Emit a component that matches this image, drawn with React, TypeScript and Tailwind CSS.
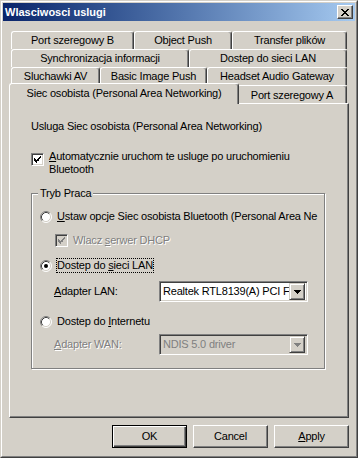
import clsx from 'clsx';

const raised = 'border-t border-l border-t-white border-l-white border-r border-b border-r-[#404040] border-b-[#404040] shadow-[inset_-1px_-1px_0_#808080]';
const sunken = 'border-t border-l border-t-[#808080] border-l-[#808080] border-r border-b border-r-white border-b-white shadow-[inset_1px_1px_0_#404040,inset_-1px_-1px_0_#d4d0c8]';
const disabledText = 'text-[#808080] [text-shadow:1px_1px_0_#fff]';

function Tab({ label, className }: { label: string; className: string }) {
  return (
    <div
      className={clsx(
        'h-[18px] flex items-center justify-center whitespace-nowrap rounded-t-[3px] border-t border-l border-r border-t-white border-l-white border-r-[#404040] shadow-[inset_-1px_0_0_#808080]',
        className
      )}
    >
      {label}
    </div>
  );
}

function CheckMark({ color }: { color: string }) {
  return (
    <svg width="7" height="7" viewBox="0 0 7 7" shapeRendering="crispEdges">
      <path d="M0 2h1v1h-1zM0 3h2v1h-2zM0 4h3v1h-3zM1 5h2v1h-2zM2 6h1v1h-1zM3 3h2v1h-2zM3 4h2v1h-2zM4 2h2v1h-2zM5 1h2v1h-2zM6 0h1v1h-1zM5 2h1v1h-1z" fill={color} />
    </svg>
  );
}

function Checkbox({ disabled }: { disabled?: boolean }) {
  return (
    <div
      className={clsx(
        'w-[13px] h-[13px] shrink-0 flex items-center justify-center',
        sunken,
        disabled ? 'bg-[#d4d0c8]' : 'bg-white'
      )}
    >
      <CheckMark color={disabled ? '#808080' : '#000'} />
    </div>
  );
}

function Radio({ checked }: { checked?: boolean }) {
  return (
    <svg width="12" height="12" viewBox="0 0 12 12" className="shrink-0">
      <circle cx="6" cy="6" r="5" fill="#fff" />
      <path d="M2.11 9.89A5.5 5.5 0 0 1 9.89 2.11" stroke="#808080" fill="none" />
      <path d="M9.89 2.11A5.5 5.5 0 0 1 2.11 9.89" stroke="#fff" fill="none" />
      <path d="M2.82 9.18A4.5 4.5 0 0 1 9.18 2.82" stroke="#404040" fill="none" />
      <path d="M9.18 2.82A4.5 4.5 0 0 1 2.82 9.18" stroke="#d4d0c8" fill="none" />
      {checked && <circle cx="6" cy="6" r="2" fill="#000" />}
    </svg>
  );
}

function Combo({ value, disabled }: { value: string; disabled?: boolean }) {
  return (
    <div className={clsx('w-[149px] h-[21px] flex items-center p-[2px]', sunken, disabled ? 'bg-[#d4d0c8]' : 'bg-white')}>
      <div className={clsx('flex-1 overflow-hidden whitespace-nowrap pl-[1px]', disabled ? 'text-[#808080]' : 'text-black')}>
        {value}
      </div>
      <div className="w-[16px] h-[17px] shrink-0 flex items-center justify-center bg-[#d4d0c8] border-t border-l border-t-[#d4d0c8] border-l-[#d4d0c8] border-r border-b border-r-[#404040] border-b-[#404040] shadow-[inset_1px_1px_0_#fff,inset_-1px_-1px_0_#808080]">
        <svg width="7" height="4" viewBox="0 0 7 4" shapeRendering="crispEdges">
          <path d="M0 0h7v1h-7zM1 1h5v1h-5zM2 2h3v1h-3zM3 3h1v1h-1z" fill={disabled ? '#808080' : '#000'} />
        </svg>
      </div>
    </div>
  );
}

function Button({ label, isDefault }: { label: React.ReactNode; isDefault?: boolean }) {
  return (
    <div
      className={clsx(
        'w-[75px] h-[23px] flex items-center justify-center',
        isDefault
          ? 'border border-black shadow-[inset_1px_1px_0_#fff,inset_-1px_-1px_0_#404040,inset_-2px_-2px_0_#808080]'
          : raised
      )}
    >
      {label}
    </div>
  );
}

export default function App() {
  return (
    <div className="w-[358px] h-[458px] bg-[#d4d0c8] border border-t-[#d4d0c8] border-l-[#d4d0c8] border-r-[#404040] border-b-[#404040] font-['Liberation_Sans',Arial,sans-serif] text-[11px] leading-[13px] tracking-[-0.2px] text-black select-none">
      <div className="h-full border border-t-white border-l-white border-r-[#808080] border-b-[#808080] p-[1px] flex flex-col">
        {/* title bar */}
        <div className="h-[18px] shrink-0 flex items-center justify-between pl-[2px] pr-[2px] bg-linear-to-r from-[#0a246a] to-[#a6caf0]">
          <span className="text-white font-bold tracking-normal">Wlasciwosci uslugi</span>
          <div className={clsx('w-[16px] h-[14px] bg-[#d4d0c8] flex items-center justify-center', raised)}>
            <svg width="8" height="7" viewBox="0 0 8 7" shapeRendering="crispEdges">
              <path d="M0 0h2v1h-2zM6 0h2v1h-2zM1 1h2v1h-2zM5 1h2v1h-2zM2 2h4v1h-4zM3 3h2v1h-2zM2 4h4v1h-4zM1 5h2v1h-2zM5 5h2v1h-2zM0 6h2v1h-2zM6 6h2v1h-2z" fill="#000" />
            </svg>
          </div>
        </div>

        {/* tabs */}
        <div className="mt-[10px] ml-[6px] w-[340px]">
          <div className="flex h-[18px] pl-[2px]">
            <Tab label="Port szeregowy B" className="w-[123px]" />
            <Tab label="Object Push" className="w-[98px]" />
            <Tab label="Transfer plików" className="w-[115px]" />
          </div>
          <div className="flex h-[18px] pl-[2px]">
            <Tab label="Synchronizacja informacji" className="w-[178px]" />
            <Tab label="Dostep do sieci LAN" className="w-[158px]" />
          </div>
          <div className="flex h-[18px] pl-[2px]">
            <Tab label="Sluchawki AV" className="w-[89px]" />
            <Tab label="Basic Image Push" className="w-[107px]" />
            <Tab label="Headset Audio Gateway" className="w-[140px]" />
          </div>
          <div className="flex h-[18px]">
            <div className="relative z-10 -mt-[2px] w-[230px] h-[21px] flex justify-center pt-[3px] bg-[#d4d0c8] whitespace-nowrap rounded-t-[3px] border-t border-l border-r border-t-white border-l-white border-r-[#404040] shadow-[inset_-1px_0_0_#808080]">
              Siec osobista (Personal Area Networking)
            </div>
            <Tab label="Port szeregowy A" className="w-[110px] -ml-[2px] pt-[2px]" />
          </div>

          {/* panel */}
          <div className={clsx('h-[315px] flex flex-col pl-[21px] pt-[16px]', raised)}>
            <div>Usluga Siec osobista (Personal Area Networking)</div>

            <div className="mt-[17px] flex items-start">
              <div className="mt-[3px]">
                <Checkbox />
              </div>
              <div className="ml-[5px]">
                <span className="underline">A</span>utomatycznie uruchom te usluge po uruchomieniu
                <br />
                Bluetooth
              </div>
            </div>

            {/* group */}
            <div className="relative mt-[17px] w-[294px] h-[176px] border border-[#808080] shadow-[inset_1px_1px_0_#fff,1px_1px_0_#fff] pl-[8px] flex flex-col">
              <span className="absolute -top-[7px] left-[6px] px-[2px] bg-[#d4d0c8]">Tryb Praca</span>

              <div className="mt-[16px] h-[13px] flex items-center">
                <Radio />
                <div className="ml-[5px] whitespace-nowrap">
                  <span className="underline">U</span>staw opcje Siec osobista Bluetooth (Personal Area Ne
                </div>
              </div>

              <div className="mt-[11px] h-[13px] flex items-center ml-[15px]">
                <Checkbox disabled />
                <div className={clsx('ml-[5px]', disabledText)}>
                  Wlacz <span className="underline">s</span>erwer DHCP
                </div>
              </div>

              <div className="mt-[12px] h-[13px] flex items-center">
                <Radio checked />
                <div className="ml-[4px] h-[15px] border border-dotted border-black">
                  Dostep do <span className="underline">s</span>ieci LAN
                </div>
              </div>

              <div className="mt-[9px] h-[21px] flex items-center ml-[14px]">
                <div className="w-[105px]">
                  <span className="underline">A</span>dapter LAN:
                </div>
                <Combo value="Realtek RTL8139(A) PCI F" />
              </div>

              <div className="mt-[13px] h-[13px] flex items-center">
                <Radio />
                <div className="ml-[5px]">
                  Dostep do <span className="underline">I</span>nternetu
                </div>
              </div>

              <div className="mt-[6px] h-[21px] flex items-center ml-[14px]">
                <div className={clsx('w-[105px]', disabledText)}>
                  <span className="underline">A</span>dapter WAN:
                </div>
                <Combo value="NDIS 5.0 driver" disabled />
              </div>
            </div>
          </div>
        </div>

        {/* buttons */}
        <div className="mt-[7px] flex justify-end gap-[6px] pr-[6px]">
          <Button label="OK" isDefault />
          <Button label="Cancel" />
          <Button
            label={
              <span>
                <span className="underline">A</span>pply
              </span>
            }
          />
        </div>
      </div>
    </div>
  );
}
